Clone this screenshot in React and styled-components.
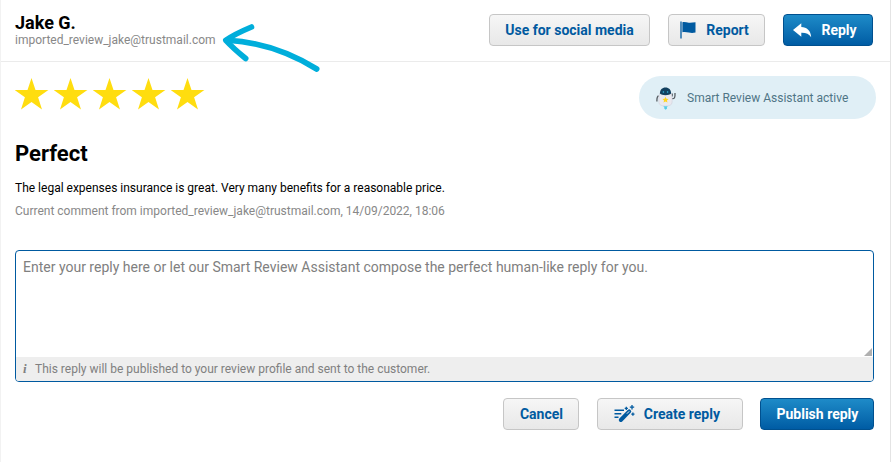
import React from "react";
import styled, { createGlobalStyle, css } from "styled-components";

const GlobalStyle = createGlobalStyle`
  * {
    box-sizing: border-box;
  }

  body {
    margin: 0;
    background-color: #fff;
    font-family: Roboto, "Liberation Sans", sans-serif;
  }
`;

const Card = styled.main`
  position: relative;
  width: 891px;
  height: 462px;
  overflow: hidden;
  background-color: #fff;
  border-left: 1px solid #f2f2f2;
  border-right: 1px solid #e4e4e4;
`;

const Header = styled.header`
  display: flex;
  justify-content: space-between;
  height: 62px;
  padding: 14px 17px 0 14px;
  border-bottom: 1px solid #ebebeb;
`;

const Name = styled.h1`
  margin: 0;
  font-size: 18px;
  font-weight: 700;
  line-height: 18px;
  color: #000;
`;

const Email = styled.div`
  font-size: 12px;
  line-height: 16px;
  color: #888;
`;

const HeaderActions = styled.div`
  display: flex;
  gap: 18px;
`;

const Button = styled.button`
  display: flex;
  align-items: center;
  justify-content: center;
  gap: ${(props) => props.$gap || 0}px;
  width: ${(props) => props.$width}px;
  height: 32px;
  padding: 0 ${(props) => props.$inset || 0}px 0 0;
  border: 1px solid #c6c6c6;
  border-radius: 4px;
  background: linear-gradient(#f6f6f6, #e8e8e8);
  color: #005aa0;
  font-family: inherit;
  font-size: 14px;
  font-weight: 700;
  white-space: nowrap;

  ${(props) =>
    props.$primary &&
    css`
      border-color: #00508f;
      background: linear-gradient(#1e8bc8, #005ca4);
      color: #fff;
    `}
`;

const Content = styled.section`
  padding: 17px 15px 0 14px;
`;

const RatingRow = styled.div`
  display: flex;
  justify-content: space-between;
  height: 40px;
  margin-top: -3px;
`;

const Stars = styled.div`
  display: flex;
  gap: 5px;
  padding-top: 1px;
`;

const AssistantBadge = styled.div`
  display: flex;
  align-items: center;
  gap: 10px;
  width: 237px;
  height: 43px;
  margin-right: -1px;
  padding-left: 16px;
  border-radius: 22px;
  background-color: #e0eff6;
  color: #4f7586;
  font-size: 12px;
`;

const Title = styled.h2`
  margin: 25px 0 0;
  font-size: 22px;
  font-weight: 700;
  line-height: 26px;
  color: #000;
`;

const Comment = styled.p`
  margin: 12px 0 0;
  font-size: 12px;
  line-height: 18px;
  color: #000;
`;

const Meta = styled.p`
  margin: 5px 0 0;
  font-size: 12px;
  line-height: 18px;
  color: #888;
`;

const ReplyBox = styled.div`
  display: flex;
  flex-direction: column;
  width: 859px;
  height: 132px;
  margin-top: 30px;
  overflow: hidden;
  border: 1px solid #005aa0;
  border-radius: 4px;
`;

const ReplyField = styled.div`
  position: relative;
  flex: 1;
  padding: 8px 7px;
  font-size: 14px;
  line-height: 17px;
  color: #808080;
`;

const ResizeHandle = styled.span`
  position: absolute;
  right: 1px;
  bottom: 1px;
  width: 8px;
  height: 8px;
  background-color: #b0b0b0;
  clip-path: polygon(100% 0, 100% 100%, 0 100%);
`;

const ReplyHint = styled.div`
  display: flex;
  align-items: center;
  height: 24px;
  padding-left: 7px;
  background-color: #eee;
  color: #808080;
  font-size: 12px;
`;

const InfoMark = styled.span`
  width: 12px;
  font-family: "Liberation Serif", serif;
  font-size: 13px;
  font-style: italic;
  font-weight: 700;
`;

const Footer = styled.div`
  display: flex;
  justify-content: flex-end;
  gap: 17.5px;
  padding: 16px 0.6px 0 0;
`;

const Pointer = styled.svg`
  position: absolute;
  top: 20px;
  left: 219px;
`;

const Star = () => (
  <svg width="34" height="34" viewBox="0 0 34 34">
    <path
      fill="#ffdd0f"
      d="M16.500 1l4 12h12.900l-10.300 7.300 3.900 12.100-10.500-7.400L6 32.400l3.900-12.100L-.4 13h12.900z"
    />
  </svg>
);

const FlagIcon = () => (
  <svg width="17" height="18" viewBox="0 0 17 18">
    <path stroke="#005aa0" strokeWidth="1.3" d="M1 .5v17" />
    <path
      fill="#005aa0"
      d="M2.400 1.200c2.200-.6 4.200.3 6.400.5 2.200.2 4.100-.2 6.700-.4v10.200c-2.400.6-4.500.5-6.700.1-2.200-.4-4.200-.8-6.400-.3z"
    />
  </svg>
);

const ReplyIcon = () => (
  <svg width="19" height="15" viewBox="0 0 19 15">
    <path
      fill="#fff"
      d="M0 7L8.300.3v3.800c5.700.2 9.300 3.500 9.900 10.100-2.200-3.300-5-4.500-9.900-4.400v3.900z"
    />
  </svg>
);

const WandIcon = () => (
  <svg width="21" height="18" viewBox="0 0 21 18" fill="none" stroke="#005aa0">
    <path strokeWidth="1.6" d="M.5 5.200h9.500M.5 8.700h6.800M.5 12.200h4" />
    <path strokeWidth="4" strokeLinecap="round" d="M6.800 15l8.400-8.600" />
    <path stroke="#f0f0f0" strokeWidth="1" d="M12.900 8.700l2.300-2.400" />
    <path
      strokeWidth="1.300"
      d="M18 0v4.400M15.800 2.200h4.400M12.300 1.800v3.200M10.700 3.400h3.200M18.900 7.600v3.200M17.300 9.200h3.200"
    />
  </svg>
);

const RobotIcon = () => (
  <svg width="22" height="24" viewBox="0 0 22 24">
    <path
      fill="none"
      stroke="#555a60"
      strokeWidth="1.300"
      d="M3.600 9.800C1.700 10.400 1.900 12.500 1.900 15.500M17 12.700c2.500.2 3.200-.8 3-5.700M17.200 7.500v3"
    />
    <path
      fill="#eae8ee"
      stroke="#cfd0da"
      strokeWidth=".6"
      d="M4.800 7.500h11.300c1 3 1.300 6 .9 9.500-.5 2.200-2.800 3-6.500 3s-6-.8-6.500-3c-.4-3.500-.2-6.500.8-9.500z"
    />
    <path
      fill="#12405f"
      d="M4.900 7.500C4.900 3.600 7.100 1.400 10.500 1.400s5.600 2.200 5.600 6.100c-1.200 1.300-3 1.700-5.600 1.700s-4.400-.4-5.600-1.700z"
    />
    <circle cx="8.400" cy="6" r=".8" fill="#39bde3" />
    <circle cx="12.600" cy="6" r=".8" fill="#39bde3" />
    <path
      fill="#ffd51f"
      d="M10.500 10.800l.9 2 2.200.2-1.700 1.400.6 2.200-2-1.200-2 1.200.6-2.200-1.700-1.400 2.200-.2z"
    />
    <path fill="#55cbe8" d="M8.300 20.200h4.500l-1 1.200.3 1.100-1.500 1.200-1.400-1.200.2-1.100z" />
  </svg>
);

function App() {
  return (
    <>
      <GlobalStyle />
      <Card>
        <Header>
          <div>
            <Name>Jake G.</Name>
            <Email>imported_review_jake@trustmail.com</Email>
          </div>
          <HeaderActions>
            <Button $width={161}>Use for social media</Button>
            <Button $width={97} $gap={9} $inset={4}>
              <FlagIcon />
              Report
            </Button>
            <Button $width={90} $gap={9} $inset={6} $primary>
              <ReplyIcon />
              Reply
            </Button>
          </HeaderActions>
        </Header>
        <Content>
          <RatingRow>
            <Stars>
              {[1, 2, 3, 4, 5].map((star) => (
                <Star key={star} />
              ))}
            </Stars>
            <AssistantBadge>
              <RobotIcon />
              Smart Review Assistant active
            </AssistantBadge>
          </RatingRow>
          <Title>Perfect</Title>
          <Comment>
            The legal expenses insurance is great. Very many benefits for a
            reasonable price.
          </Comment>
          <Meta>
            Current comment from imported_review_jake@trustmail.com, 14/09/2022,
            18:06
          </Meta>
          <ReplyBox>
            <ReplyField>
              Enter your reply here or let our Smart Review Assistant compose
              the perfect human-like reply for you.
              <ResizeHandle />
            </ReplyField>
            <ReplyHint>
              <InfoMark>i</InfoMark>
              This reply will be published to your review profile and sent to
              the customer.
            </ReplyHint>
          </ReplyBox>
          <Footer>
            <Button $width={76}>Cancel</Button>
            <Button $width={146} $gap={9} $inset={6}>
              <WandIcon />
              Create reply
            </Button>
            <Button $width={114} $primary>
              Publish reply
            </Button>
          </Footer>
        </Content>
        <Pointer
          width="105"
          height="55"
          viewBox="220 20 105 55"
          fill="none"
          stroke="#00aedb"
          strokeWidth="5.6"
          strokeLinecap="round"
          strokeLinejoin="round"
        >
          <path d="M251.500 27C242 31 233 35 225.800 40.300C232 47 239 53 245.700 58.500" />
          <path d="M228 40.300C258 42 289 52 316.700 69" />
        </Pointer>
      </Card>
    </>
  );
}

export default App;
